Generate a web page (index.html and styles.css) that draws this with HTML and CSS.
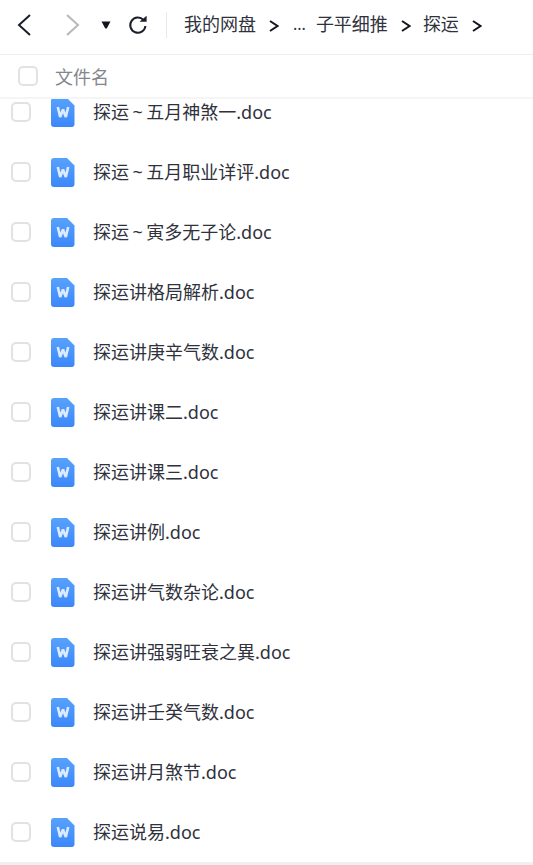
FILE: index.html
```html
<!DOCTYPE html>
<html lang="zh-CN">
<head>
    <meta charset="UTF-8">
    <meta name="viewport" content="width=device-width, initial-scale=1.0">
    <title>探运</title>
    <link rel="stylesheet" href="styles.css">
</head>
<body>
    <!-- Toolbar -->
    <div class="toolbar">
        <div class="nav-buttons">
            <svg class="nav-back" width="16" height="24" viewBox="0 0 16 24"><path d="M14 2 L3 12 L14 22" fill="none" stroke="#1c1f2b" stroke-width="2"/></svg>
            <svg class="nav-forward" width="16" height="24" viewBox="0 0 16 24"><path d="M2 2 L13 12 L2 22" fill="none" stroke="#b8b8b8" stroke-width="2"/></svg>
            <svg class="nav-menu" width="10" height="8" viewBox="0 0 10 8"><path d="M0.5 0.5 H9.5 L6 7 Q5 8 4 7 Z" fill="#14161f"/></svg>
            <svg class="nav-refresh" width="20" height="20" viewBox="0 0 20 20"><path d="M15.6 5.2 A7.6 7.6 0 1 0 17.4 11" fill="none" stroke="#1c1f2b" stroke-width="2"/><path d="M11.5 6.8 H18.6 V0.8 Z" fill="#1c1f2b"/></svg>
        </div>
        <div class="breadcrumb">
            <span class="crumb">我的网盘</span>
            <svg class="crumb-arrow" width="10" height="12" viewBox="0 0 10 12"><path d="M1 1 L8.5 6 L1 11" fill="none" stroke="#14161f" stroke-width="2"/></svg>
            <span class="crumb crumb-more">...</span>
            <span class="crumb">子平细推</span>
            <svg class="crumb-arrow" width="10" height="12" viewBox="0 0 10 12"><path d="M1 1 L8.5 6 L1 11" fill="none" stroke="#14161f" stroke-width="2"/></svg>
            <span class="crumb">探运</span>
            <svg class="crumb-arrow" width="10" height="12" viewBox="0 0 10 12"><path d="M1 1 L8.5 6 L1 11" fill="none" stroke="#14161f" stroke-width="2"/></svg>
        </div>
    </div>

    <!-- Column header -->
    <div class="list-header">
        <span class="checkbox"></span>
        <span class="header-title">文件名</span>
    </div>

    <!-- File list, scrolled a little -->
    <div class="file-list">
        <div class="file-rows" id="fileRows"></div>
    </div>
    <div class="footer-line"></div>

    <script>
        const files = [
            '探运~五月神煞一.doc',
            '探运~五月职业详评.doc',
            '探运~寅多无子论.doc',
            '探运讲格局解析.doc',
            '探运讲庚辛气数.doc',
            '探运讲课二.doc',
            '探运讲课三.doc',
            '探运讲例.doc',
            '探运讲气数杂论.doc',
            '探运讲强弱旺衰之異.doc',
            '探运讲壬癸气数.doc',
            '探运讲月煞节.doc',
            '探运说易.doc'
        ];

        const docIcon = '<svg class="doc-icon" width="24" height="29" viewBox="0 0 24 29">'
            + '<defs><linearGradient id="docBlue" x1="0" y1="0" x2="0" y2="1"><stop offset="0" stop-color="#57a2fb"/><stop offset="1" stop-color="#3b87fb"/></linearGradient></defs>'
            + '<path d="M3 0 H16 L23.5 7.5 V26 Q23.5 29 20.5 29 H3 Q0 29 0 26 V3 Q0 0 3 0 Z" fill="url(#docBlue)"/>'
            + '<path d="M6.8 9 L9.2 19 L12 11.5 L14.8 19 L17.2 9" fill="none" stroke="#dcebff" stroke-width="2.6" stroke-linejoin="bevel"/>'
            + '</svg>';

        const fileRows = document.getElementById('fileRows');
        files.forEach((name) => {
            const row = document.createElement('div');
            row.className = 'file-row';
            row.innerHTML = '<span class="checkbox"></span>' + docIcon
                + '<span class="file-name">' + name.replace('~', '<span class="tilde">~</span>') + '</span>';
            fileRows.appendChild(row);
        });
    </script>
</body>
</html>
```

FILE: styles.css
```css
* {
    margin: 0;
    padding: 0;
    box-sizing: border-box;
    font-family: "Noto Sans", "Noto Sans CJK SC", sans-serif;
}

html, body {
    height: 100%;
}

body {
    display: flex;
    flex-direction: column;
    background-color: white;
    color: #2f323c;
    overflow: hidden;
}

.toolbar {
    display: flex;
    align-items: center;
    height: 55px;
    padding: 0 0 5px 16px;
    border-bottom: 1px solid #eeeeee;
    flex-shrink: 0;
}

.nav-buttons {
    display: flex;
    align-items: center;
    height: 26px;
    padding-right: 18px;
    border-right: 1px solid #e8e8e8;
}

.nav-forward {
    margin-left: 33px;
}

.nav-menu {
    margin-left: 20px;
}

.nav-refresh {
    margin-left: 17px;
}

.breadcrumb {
    display: flex;
    align-items: center;
    padding-left: 17px;
    font-size: 18px;
    line-height: 24px;
}

.crumb {
    margin-bottom: 2px;
}

.crumb-arrow {
    margin: 2px 12px 0 13px;
}

.crumb-more {
    margin-left: 2px;
    margin-right: 10px;
    font-size: 16px;
}

.list-header {
    display: flex;
    align-items: center;
    height: 44px;
    padding-left: 18px;
    border-bottom: 2px solid #f5f5f5;
    flex-shrink: 0;
}

.header-title {
    margin-left: 17px;
    font-size: 18px;
    color: #84868d;
}

.checkbox {
    display: block;
    width: 20px;
    height: 20px;
    border: 2px solid #e2e2e2;
    border-radius: 5px;
    flex-shrink: 0;
}

.file-list {
    flex: 1;
    overflow: hidden;
}

.file-rows {
    margin-top: -17px;
}

.file-row {
    display: flex;
    align-items: center;
    height: 60px;
    padding-left: 11px;
}

.doc-icon {
    margin-left: 20px;
    flex-shrink: 0;
}

.file-name {
    margin-left: 18px;
    font-size: 18px;
    line-height: 24px;
}

.tilde {
    margin: 0 3.5px;
}

.footer-line {
    height: 3px;
    background-color: #f0f0f0;
    flex-shrink: 0;
}
```
